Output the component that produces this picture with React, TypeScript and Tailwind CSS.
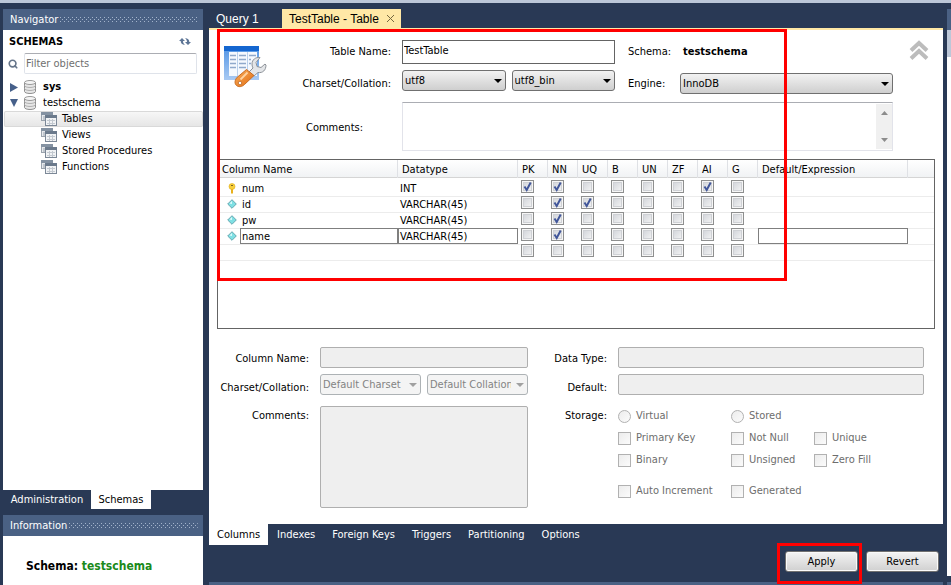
import { Search } from "lucide-react";
import { useState, type ReactNode } from "react";

type FlagKey = "PK" | "NN" | "UQ" | "B" | "UN" | "ZF" | "AI" | "G";

interface ColumnRow {
  name: string;
  datatype: string;
  flags: FlagKey[];
}

const FLAGS: FlagKey[] = ["PK", "NN", "UQ", "B", "UN", "ZF", "AI", "G"];

const INITIAL_ROWS: ColumnRow[] = [
  { name: "num", datatype: "INT", flags: ["PK", "NN", "AI"] },
  { name: "id", datatype: "VARCHAR(45)", flags: ["NN", "UQ"] },
  { name: "pw", datatype: "VARCHAR(45)", flags: ["NN"] },
  { name: "name", datatype: "VARCHAR(45)", flags: ["NN"] },
  { name: "", datatype: "", flags: [] },
];

const SELECTED_ROW = 3;

const SCHEMA_FOLDERS = ["Tables", "Views", "Stored Procedures", "Functions"];

const EDITOR_TABS = [
  "Columns",
  "Indexes",
  "Foreign Keys",
  "Triggers",
  "Partitioning",
  "Options",
];

function DotGrip({ id }: { id: string }) {
  return (
    <svg className="h-[6px] min-w-0 flex-1" aria-hidden="true">
      <defs>
        <pattern id={id} width="4" height="4" patternUnits="userSpaceOnUse">
          <rect x="0" y="0" width="1" height="1" fill="#a3b3cb" />
          <rect x="2" y="2" width="1" height="1" fill="#a3b3cb" />
        </pattern>
      </defs>
      <rect width="100%" height="6" fill={`url(#${id})`} />
    </svg>
  );
}

function PanelHeader({ title, id }: { title: string; id: string }) {
  return (
    <div className="flex h-[21px] shrink-0 items-center gap-[2px] bg-[#4a6184] pr-[5px] pl-[7px] text-white">
      <h2>{title}</h2>
      <DotGrip id={id} />
    </div>
  );
}

function DatabaseIcon() {
  return (
    <svg width="12" height="14" viewBox="0 0 12 14" aria-hidden="true">
      <path
        d="M.5 2.500v9c0 1.100 2.500 2 5.500 2s5.500-.9 5.500-2v-9"
        fill="#e6e6e6"
        stroke="#8f8f8f"
      />
      <ellipse cx="6" cy="2.500" rx="5.500" ry="2" fill="#f4f4f4" stroke="#9a9a9a" />
      <path
        d="M.5 5.500c0 1.100 2.500 2 5.500 2s5.500-.9 5.500-2M.5 8.500c0 1.100 2.500 2 5.500 2s5.500-.9 5.500-2"
        fill="none"
        stroke="#b0b0b0"
      />
    </svg>
  );
}

function FolderIcon() {
  return (
    <svg width="16" height="14" viewBox="0 0 16 14" aria-hidden="true">
      <rect x=".5" y=".5" width="11" height="8" fill="#e6e9ed" stroke="#9aa3ad" />
      <path d="M0 0h12v3H0z" fill="#8492a2" />
      <path d="M2 5h2M2 7h2" stroke="#9aa3ad" />
      <rect x="4.500" y="3.500" width="11" height="10" fill="#f1f3f5" stroke="#7c8897" />
      <path d="M4 3h12v3H4z" fill="#6b7a8c" />
      <path d="M6 8.500h8M6 11.500h8M8.500 7v6M11.500 7v6" stroke="#c3c9d0" />
    </svg>
  );
}

function RefreshIcon() {
  return (
    <svg width="12" height="9" viewBox="0 0 12 9" aria-hidden="true">
      <path d="M0 4 3 1l3 3H4c0 1.500.5 2.500 2 4-3-.2-4.300-1.800-4.300-4z" fill="#5d7596" />
      <path d="M12 5 9 8 6 5h2c0-1.500-.5-2.500-2-4 3 .2 4.300 1.800 4.300 4z" fill="#5d7596" />
    </svg>
  );
}

function TableEditIcon() {
  return (
    <svg width="44" height="44" viewBox="0 0 44 44" aria-hidden="true">
      <defs>
        <linearGradient id="table-body" x1="0" y1="0" x2="0" y2="1">
          <stop offset="0" stopColor="#4f93e4" />
          <stop offset="1" stopColor="#a9caf3" />
        </linearGradient>
        <linearGradient id="handle" x1="0" y1="0" x2="1" y2="1">
          <stop offset="0" stopColor="#fbb05c" />
          <stop offset="1" stopColor="#e06a10" />
        </linearGradient>
      </defs>
      <rect x="1" y="2" width="35" height="34" fill="url(#table-body)" />
      <rect x="1" y="2" width="35" height="5" fill="#1466d0" />
      <rect x="6" y="8" width="28" height="24" fill="#f5f9fe" />
      <path d="M14.500 8v24M24.500 8v24" stroke="#b9d0ec" />
      <path
        d="M7 11.500h6M7 15.500h6M7 19.500h6M7 23.500h6M16 11.500h7M16 15.500h7M16 19.500h7M16 23.500h7M26 11.500h7M26 15.500h2M26 19.500h2"
        stroke="#8fa9cb"
        strokeWidth="1.500"
      />
      <path
        d="M37 13.500c-4.500-.5-8 2.200-8 6.500 0 1.500.3 2.800 1 4l-4 4 5 4 4-3.500c4.800.8 8-2.500 8-7.500l-1-1-4 3.500-4-1-1-4z"
        fill="#e3e5e8"
        stroke="#8d9299"
      />
      <path
        d="m23.500 25.500 7.500 6-9.500 9c-2.300 2.300-6 3-8.200.8s-1.300-5.800 1-8.100z"
        fill="url(#handle)"
        stroke="#c86c22"
      />
      <path d="m24.500 28.500-7 7" stroke="#ffd3a0" strokeWidth="1.800" />
      <circle cx="17" cy="39" r="1.700" fill="#fff" stroke="#a85312" strokeWidth=".6" />
    </svg>
  );
}

function CollapseIcon() {
  return (
    <svg width="20" height="20" viewBox="0 0 20 20" aria-hidden="true">
      <path
        d="m2 10.500 8-7.500 8 7.500M2 18.500l8-7.500 8 7.500"
        fill="none"
        stroke="#bcbcbc"
        strokeWidth="4"
      />
    </svg>
  );
}

function KeyIcon() {
  return (
    <svg width="10" height="11" viewBox="0 0 10 11" aria-hidden="true">
      <circle cx="5" cy="3.500" r="3" fill="#f7cf3c" stroke="#e0ab18" strokeWidth=".6" />
      <path d="M4 6h2v4l-1 1-1-1z" fill="#e8b11c" />
      <path d="M4 2h2v1H4z" fill="#7a6420" />
    </svg>
  );
}

function DiamondIcon() {
  return (
    <svg width="10" height="10" viewBox="0 0 10 10" aria-hidden="true">
      <path d="m5 .7 4.300 4.300L5 9.300.7 5z" fill="#7fe0e4" stroke="#5f9fa8" strokeWidth=".9" />
      <path d="M5 2 2.500 4.500 5 5z" fill="#dffafa" />
    </svg>
  );
}

interface ComboProps {
  id: string;
  label?: string;
  options: string[];
  disabled?: boolean;
}

function Combo({ id, label, options, disabled = false }: ComboProps) {
  return (
    <div className="relative min-w-0 flex-1">
      <select
        id={id}
        aria-label={label}
        disabled={disabled}
        className="block h-[21px] w-full appearance-none rounded-[3px] border border-[#707070] bg-linear-to-b from-[#f2f2f2] to-[#cfcfcf] pr-4 pl-[2px] text-black disabled:border-[#adb2b5] disabled:from-[#f4f4f4] disabled:to-[#f4f4f4] disabled:text-[#838383] disabled:opacity-100"
      >
        {options.map((option) => (
          <option key={option}>{option}</option>
        ))}
      </select>
      <svg
        width="8"
        height="4"
        viewBox="0 0 8 4"
        className={`pointer-events-none absolute top-[9px] right-[4px] ${disabled ? "text-[#a0a0a0]" : "text-black"}`}
        aria-hidden="true"
      >
        <path d="M0 0h8L4 4z" fill="currentColor" />
      </svg>
    </div>
  );
}

interface GridCheckProps {
  label: string;
  checked: boolean;
  onToggle: () => void;
}

function GridCheck({ label, checked, onToggle }: GridCheckProps) {
  return (
    <span className="relative block size-[13px]">
      <input
        type="checkbox"
        aria-label={label}
        checked={checked}
        onChange={onToggle}
        className="block size-[13px] appearance-none border border-[#8e8f8f] bg-linear-to-br from-[#cdd0d6] to-[#f8f8f8] shadow-[inset_0_0_0_1px_#f6f6f6,inset_0_0_0_2px_#cfd1d5]"
      />
      {checked && (
        <svg
          viewBox="0 0 13 13"
          className="pointer-events-none absolute inset-0"
          aria-hidden="true"
        >
          <path d="m3.500 6.500 2.200 3.500 4-7.500" fill="none" stroke="#42579a" strokeWidth="2" />
        </svg>
      )}
    </span>
  );
}

function Option({ type, children }: { type: "checkbox" | "radio"; children: ReactNode }) {
  return (
    <label className="flex h-4 items-center gap-[5px] whitespace-nowrap text-[#6d6d6d]">
      <input
        type={type}
        name={type === "radio" ? "storage" : undefined}
        disabled
        className={`size-[13px] shrink-0 appearance-none border border-[#b1b1b1] bg-linear-to-br from-[#ececec] to-[#fbfbfb] ${type === "radio" ? "rounded-full" : ""}`}
      />
      {children}
    </label>
  );
}

function Sidebar() {
  return (
    <aside className="flex w-[200px] shrink-0 flex-col">
      <PanelHeader title="Navigator" id="grip-navigator" />
      <div className="min-h-0 flex-1 bg-white">
        <div className="flex h-[23px] items-center justify-between pr-3 pl-[6px]">
          <h3 className="font-bold">SCHEMAS</h3>
          <button type="button" aria-label="Refresh schemas">
            <RefreshIcon />
          </button>
        </div>
        <div className="flex items-center gap-[6px] pr-[6px] pl-[5px]">
          <Search className="size-[10px] shrink-0 text-[#66758a]" strokeWidth={4} />
          <input
            type="text"
            aria-label="Filter objects"
            placeholder="Filter objects"
            className="h-[21px] min-w-0 flex-1 rounded-[2px] border border-[#dfe3ea] border-t-[#abadb3] px-px placeholder:text-[#6f6f6f]"
          />
        </div>
        <ul className="pt-[5px]">
          <li className="flex h-4 items-center pl-[7px] font-bold">
            <svg width="8" height="9" viewBox="0 0 8 9" aria-hidden="true">
              <path d="M0 0v9l8-4.500z" fill="#46608a" />
            </svg>
            <span className="mr-[7px] ml-[6px]">
              <DatabaseIcon />
            </span>
            sys
          </li>
          <li>
            <div className="flex h-4 items-center pl-[7px]">
              <svg width="8" height="8" viewBox="0 0 8 8" aria-hidden="true">
                <path d="M0 0h8L4 8z" fill="#46608a" />
              </svg>
              <span className="mr-[7px] ml-[6px]">
                <DatabaseIcon />
              </span>
              testschema
            </div>
            <ul>
              {SCHEMA_FOLDERS.map((folder, index) => (
                <li
                  key={folder}
                  className={`ml-px flex h-4 items-center gap-[5px] pl-[37px] ${
                    index === 0
                      ? "rounded-[2px] bg-linear-to-b from-[#f8f8f8] to-[#e5e5e5] shadow-[inset_0_0_0_1px_#d9d9d9]"
                      : ""
                  }`}
                >
                  <FolderIcon />
                  {folder}
                </li>
              ))}
            </ul>
          </li>
        </ul>
      </div>
      <div className="flex h-[25px] shrink-0 items-start text-white">
        <button type="button" className="h-[19px] w-[88px]">
          Administration
        </button>
        <button type="button" className="h-[19px] w-[60px] bg-white text-black">
          Schemas
        </button>
      </div>
      <PanelHeader title="Information" id="grip-information" />
      <div className="h-[49px] shrink-0 bg-white pt-[22px] pl-[23px] text-xs leading-4 font-bold">
        Schema: <span className="text-[#1a8a1a]">testschema</span>
      </div>
    </aside>
  );
}

function TableForm() {
  return (
    <div className="relative grid grid-cols-[182px_minmax(0,1fr)_54px_minmax(0,1fr)] gap-y-[6px] pt-[10px] pr-[50px]">
      <div className="absolute top-[14px] left-[14px]">
        <TableEditIcon />
      </div>
      <button
        type="button"
        aria-label="Collapse header"
        className="absolute top-[10px] right-[14px]"
      >
        <CollapseIcon />
      </button>

      <label htmlFor="table-name" className="pt-1 text-right">
        Table Name:
      </label>
      <div className="pl-[11px]">
        <input
          id="table-name"
          type="text"
          defaultValue="TestTable"
          className="block h-6 w-full border border-[#646464] px-px pb-1"
        />
      </div>
      <span className="pt-1 pl-[13px]">Schema:</span>
      <span className="pt-1 pl-[14px] font-bold">testschema</span>

      <label htmlFor="table-charset" className="pt-[6px] text-right">
        Charset/Collation:
      </label>
      <div className="flex gap-[6px] pl-[11px]">
        <Combo id="table-charset" options={["utf8"]} />
        <Combo id="table-collation" label="Collation" options={["utf8_bin"]} />
      </div>
      <label htmlFor="table-engine" className="pt-[6px] pl-[13px]">
        Engine:
      </label>
      <div className="flex pt-[3px] pl-[11px]">
        <Combo id="table-engine" options={["InnoDB"]} />
      </div>

      <label htmlFor="table-comments" className="pt-5 pr-7 text-right">
        Comments:
      </label>
      <div className="relative col-span-3 pt-[2px] pl-[11px]">
        <textarea
          id="table-comments"
          className="block h-[49px] w-full resize-none border border-[#e2e3ea] border-t-[#abadb3]"
        />
        <div className="absolute top-1 right-px flex h-[45px] w-4 flex-col items-center justify-between bg-[#f0f0f0] py-[7px]">
          <svg width="7" height="4" viewBox="0 0 7 4" aria-hidden="true">
            <path d="M0 4h7L3.500 0z" fill="#8c8c8c" />
          </svg>
          <svg width="7" height="4" viewBox="0 0 7 4" aria-hidden="true">
            <path d="M0 0h7L3.500 4z" fill="#8c8c8c" />
          </svg>
        </div>
      </div>
    </div>
  );
}

function ColumnGrid() {
  const [rows, setRows] = useState(INITIAL_ROWS);

  const toggle = (rowIndex: number, flag: FlagKey) => {
    setRows((current) =>
      current.map((row, index) => {
        if (index !== rowIndex) return row;
        const flags = row.flags.includes(flag)
          ? row.flags.filter((item) => item !== flag)
          : [...row.flags, flag];
        return { ...row, flags };
      })
    );
  };

  const headCell =
    "h-[18px] border-r border-[#dfe1e5] p-0 pt-[2px] pl-1 text-left leading-4 font-normal";

  return (
    <div className="mx-2 mt-2 h-[170px] border border-[#646464] bg-white">
      <table className="w-full table-fixed border-separate border-spacing-0">
        <colgroup>
          <col className="w-[180px]" />
          <col className="w-[120px]" />
          {FLAGS.map((flag) => (
            <col key={flag} className="w-[30px]" />
          ))}
          <col className="w-[150px]" />
          <col />
        </colgroup>
        <thead>
          <tr className="bg-linear-to-b from-white to-[#f0f2f4] shadow-[inset_0_-1px_#d5d5d5]">
            <th className={headCell}>Column Name</th>
            <th className={headCell}>Datatype</th>
            {FLAGS.map((flag) => (
              <th key={flag} className={headCell}>
                {flag}
              </th>
            ))}
            <th className={headCell}>Default/Expression</th>
            <th className="p-0" />
          </tr>
        </thead>
        <tbody>
          {rows.map((row, rowIndex) => {
            const top = rowIndex === 0 ? "pt-[2px]" : "";
            const box =
              rowIndex === SELECTED_ROW ? "shadow-[inset_0_0_0_1px_#7f7f7f]" : "";
            return (
              <tr
                key={rowIndex}
                className={rowIndex > 0 ? "shadow-[inset_0_1px_#ececec]" : ""}
              >
                <td className={`p-0 ${top}`}>
                  <div className="flex h-4 items-center">
                    <span className="flex w-[22px] shrink-0 justify-center pl-[6px]">
                      {row.name && (rowIndex === 0 ? <KeyIcon /> : <DiamondIcon />)}
                    </span>
                    <span className={`h-4 flex-1 pt-px pl-[2px] leading-4 ${box}`}>
                      {row.name}
                    </span>
                  </div>
                </td>
                <td className={`p-0 ${top}`}>
                  <div className={`h-4 pt-px pl-[2px] leading-4 ${box}`}>{row.datatype}</div>
                </td>
                {FLAGS.map((flag) => (
                  <td key={flag} className={`p-0 pl-[3px] align-top ${top}`}>
                    <GridCheck
                      label={`${row.name || "new column"} ${flag}`}
                      checked={row.flags.includes(flag)}
                      onToggle={() => toggle(rowIndex, flag)}
                    />
                  </td>
                ))}
                <td className={`p-0 ${top}`}>
                  <div className={`h-4 ${box}`} />
                </td>
                <td className="p-0" />
              </tr>
            );
          })}
          <tr className="h-4 shadow-[inset_0_1px_#ececec]">
            <td colSpan={12} className="p-0" />
          </tr>
        </tbody>
      </table>
    </div>
  );
}

function ColumnDetails() {
  const field =
    "block w-full rounded-[2px] border border-[#afafaf] bg-[#efefef] disabled:opacity-100";

  return (
    <div className="grid grid-cols-[100px_minmax(0,219fr)_79px_minmax(0,317fr)] gap-y-[6px] pt-[18px] pr-[19px]">
      <label htmlFor="column-name" className="pt-1 text-right">
        Column Name:
      </label>
      <div className="pl-[11px]">
        <input id="column-name" type="text" disabled className={`h-[21px] ${field}`} />
      </div>
      <label htmlFor="data-type" className="pt-1 text-right">
        Data Type:
      </label>
      <div className="pl-[11px]">
        <input id="data-type" type="text" disabled className={`h-[21px] ${field}`} />
      </div>

      <label htmlFor="column-charset" className="pt-[6px] text-right">
        Charset/Collation:
      </label>
      <div className="flex gap-[6px] pl-[11px]">
        <Combo id="column-charset" options={["Default Charset"]} disabled />
        <Combo
          id="column-collation"
          label="Column collation"
          options={["Default Collation"]}
          disabled
        />
      </div>
      <label htmlFor="column-default" className="pt-[6px] text-right">
        Default:
      </label>
      <div className="pl-[11px]">
        <input id="column-default" type="text" disabled className={`h-[21px] ${field}`} />
      </div>

      <label htmlFor="column-comments" className="pt-[6px] text-right">
        Comments:
      </label>
      <div className="pt-[4px] pl-[11px]">
        <textarea
          id="column-comments"
          disabled
          className={`h-[102px] resize-none ${field}`}
        />
      </div>
      <span className="pt-[6px] text-right">Storage:</span>
      <div className="grid grid-cols-[113px_83px_1fr] content-start gap-y-[6px] pt-[6px] pl-[11px]">
        <Option type="radio">Virtual</Option>
        <Option type="radio">Stored</Option>
        <span />
        <Option type="checkbox">Primary Key</Option>
        <Option type="checkbox">Not Null</Option>
        <Option type="checkbox">Unique</Option>
        <Option type="checkbox">Binary</Option>
        <Option type="checkbox">Unsigned</Option>
        <Option type="checkbox">Zero Fill</Option>
        <div className="pt-[9px]">
          <Option type="checkbox">Auto Increment</Option>
        </div>
        <div className="pt-[9px]">
          <Option type="checkbox">Generated</Option>
        </div>
      </div>
    </div>
  );
}

function ActionButton({ children }: { children: ReactNode }) {
  return (
    <button
      type="button"
      className="h-[21px] w-[73px] rounded-[3px] border border-[#707070] bg-linear-to-b from-[#f4f4f4] to-[#d0d0d0] text-black shadow-[inset_0_0_0_1px_#fafafa]"
    >
      {children}
    </button>
  );
}

function Editor() {
  const [activeTab, setActiveTab] = useState("Columns");

  return (
    <main className="flex min-w-0 flex-1 flex-col">
      <div className="flex h-[19px] shrink-0 font-['Liberation_Sans',sans-serif] text-xs text-white">
        <button type="button" className="w-[73px] pl-[7px] text-left">
          Query 1
        </button>
        <div className="flex w-[119px] items-center justify-between bg-[#ffe8a6] px-[7px] text-black">
          <span>TestTable - Table</span>
          <button type="button" aria-label="Close tab">
            <svg width="7" height="7" viewBox="0 0 7 7" aria-hidden="true">
              <path d="m0 0 7 7M7 0 0 7" stroke="#75683f" />
            </svg>
          </button>
        </div>
      </div>
      <div className="relative min-h-0 flex-1 border-t-2 border-[#ffe8a6] bg-white">
        <TableForm />
        <ColumnGrid />
        <ColumnDetails />
        <div className="pointer-events-none absolute -top-px left-2 h-[252px] w-[570px] border-3 border-[#ff0000]" />
      </div>
      <div className="flex h-[21px] shrink-0 gap-px text-white">
        {EDITOR_TABS.map((tab) => (
          <button
            key={tab}
            type="button"
            onClick={() => setActiveTab(tab)}
            className={`px-2 ${tab === activeTab ? "bg-white text-black" : ""}`}
          >
            {tab}
          </button>
        ))}
      </div>
      <div className="flex h-[37px] shrink-0 items-start justify-end gap-2 pt-[6px] pr-[4px]">
        <div className="relative">
          <ActionButton>Apply</ActionButton>
          <div className="pointer-events-none absolute -top-2 -left-2 h-[41px] w-[85px] border-3 border-[#ff0000]" />
        </div>
        <ActionButton>Revert</ActionButton>
      </div>
      <div className="h-[3px] shrink-0 bg-[#4a6184]" />
    </main>
  );
}

export default function App() {
  return (
    <div className="flex h-screen flex-col overflow-hidden bg-[#293955] font-['DejaVu_Sans_Condensed','DejaVu_Sans',sans-serif] text-[11px] leading-4 text-black">
      <div className="h-[3px] shrink-0 bg-[#bcc7d8]" />
      <div className="flex min-h-0 flex-1 pt-[6px] pl-[3px]">
        <Sidebar />
        <div className="w-[6px] shrink-0" />
        <Editor />
        <div className="flex w-2 shrink-0 flex-col pl-1">
          <div className="h-[21px] bg-[#4a6184]" />
          <div className="h-[27px] bg-[#bcc7d8]" />
          <div className="mb-[6px] flex-1 bg-white" />
          <div className="h-[3px] bg-[#4a6184]" />
        </div>
      </div>
    </div>
  );
}
